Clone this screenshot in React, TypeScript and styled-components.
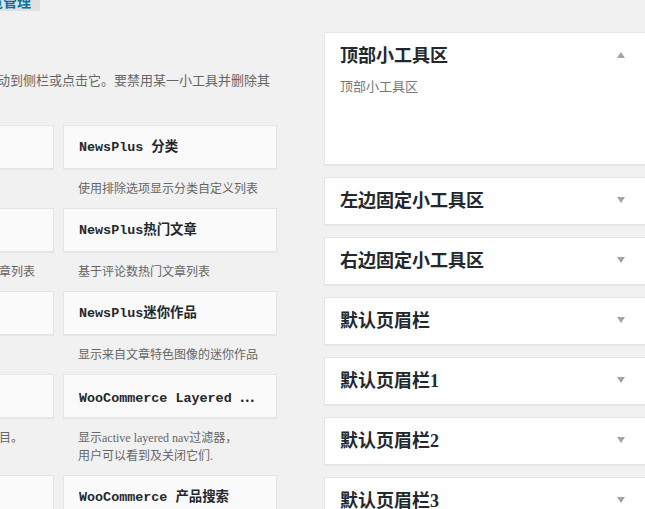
import React from 'react';
import styled, { createGlobalStyle } from 'styled-components';

const GlobalStyle = createGlobalStyle`
  html, body {
    margin: 0;
    padding: 0;
    background: #f1f1f1;
  }
  body {
    font-family: "Noto Sans CJK SC", sans-serif;
    color: #444;
  }
`;

const Page = styled.div`
  width: 645px;
  height: 509px;
  overflow: hidden;
  background: #f1f1f1;
`;

const Header = styled.div`
  margin-top: -12px;
  height: 22px;
`;

const LiveButton = styled.a`
  display: inline-block;
  margin-left: -89px;
  padding: 4px 9px 2px 8px;
  line-height: 16px;
  font-size: 14px;
  font-weight: 700;
  color: #0073aa;
  background: #e0e0e0;
  border-radius: 2px;
  text-decoration: none;
  white-space: nowrap;
`;

const Columns = styled.div`
  display: flex;
  align-items: flex-start;
`;

const Available = styled.div`
  flex: none;
  width: 437px;
  margin-left: -160px;
`;

const Intro = styled.p`
  margin: 61px 0 0 14px;
  line-height: 20px;
  font-size: 13px;
  font-family: "Liberation Serif", "Noto Sans CJK SC", serif;
  color: #666;
  white-space: nowrap;
`;

const WidgetGrid = styled.div`
  display: grid;
  grid-template-columns: 214px 214px;
  column-gap: 9px;
  margin-top: 34px;
`;

const WidgetItem = styled.div`
  display: flex;
  flex-direction: column;
`;

const WidgetCard = styled.div`
  box-sizing: border-box;
  height: 44px;
  padding: 0 15px;
  background: #fafafa;
  border: 1px solid #e5e5e5;
  box-shadow: 0 1px 1px rgba(0, 0, 0, 0.04);
`;

const WidgetTitle = styled.h3`
  margin: 0;
  line-height: 43px;
  font-size: 13.4px;
  font-weight: 700;
  font-family: "Liberation Mono", "Noto Sans CJK SC", monospace;
  color: #23282d;
  white-space: nowrap;
  overflow: hidden;
`;

const Ellipsis = styled.span`
  font-family: "Noto Sans CJK SC", "DejaVu Sans", sans-serif;
  font-weight: 700;
`;

const WidgetDesc = styled.p`
  margin: 0;
  padding: 11px 0 10px 15px;
  line-height: 18px;
  font-size: 12px;
  font-family: "Liberation Serif", "Noto Sans CJK SC", serif;
  color: #666;
  white-space: nowrap;
`;

const Sidebars = styled.div`
  flex: none;
  width: 336px;
  margin: 22px 0 0 47px;
  display: flex;
  flex-direction: column;
  gap: 12px;
`;

const SidebarBox = styled.div`
  background: #fff;
  border: 1px solid #e5e5e5;
  box-shadow: 0 1px 1px rgba(0, 0, 0, 0.04);
`;

const SidebarHead = styled.div`
  display: flex;
  align-items: center;
  padding: 15px 34px 15px 15px;
`;

const SidebarName = styled.h2`
  flex: 1;
  margin: 0;
  line-height: 16px;
  font-size: 18px;
  font-weight: 600;
  font-family: "Liberation Serif", "Noto Sans CJK SC", serif;
  color: #23282d;
`;

const Toggle = styled.span<{ $open: boolean }>`
  width: 0;
  height: 0;
  border-left: 4.5px solid transparent;
  border-right: 4.5px solid transparent;
  ${(p) => (p.$open ? 'border-bottom: 6px solid #a0a5aa;' : 'border-top: 6px solid #a0a5aa;')}
  margin-top: ${(p) => (p.$open ? '-2px' : '-3px')};
`;

const SidebarDesc = styled.p`
  margin: 0;
  padding: 0 15px;
  line-height: 14px;
  font-size: 13px;
  color: #777;
`;

const DropArea = styled.div`
  min-height: 71px;
`;

type Widget = { title: string; desc: string[]; cut?: boolean };

const widgets: Widget[] = [
  { title: '日历', desc: ['您站点文章的日历。'] },
  { title: 'NewsPlus 分类', desc: ['使用排除选项显示分类自定义列表'] },
  { title: '近期文章', desc: ['显示您网站上最近发布的文章列表'] },
  { title: 'NewsPlus热门文章', desc: ['基于评论数热门文章列表'] },
  { title: '文本', desc: ['任意文本或HTML。'] },
  { title: 'NewsPlus迷你作品', desc: ['显示来自文章特色图像的迷你作品'] },
  { title: '自定义菜单', desc: ['显示您网站的自定义菜单项目。'] },
  { title: 'WooCommerce Layered ', cut: true, desc: ['显示active layered nav过滤器，', '用户可以看到及关闭它们.'] },
  { title: '标签云', desc: ['您使用最多的标签。'] },
  { title: 'WooCommerce 产品搜索', desc: ['用于您商店的搜索框。'] },
];

const sidebars = [
  { name: '顶部小工具区', desc: '顶部小工具区', open: true },
  { name: '左边固定小工具区' },
  { name: '右边固定小工具区' },
  { name: '默认页眉栏' },
  { name: '默认页眉栏1' },
  { name: '默认页眉栏2' },
  { name: '默认页眉栏3' },
];

function App() {
  return (
    <Page>
      <GlobalStyle />
      <Header>
        <LiveButton href="#">使用实时预览管理</LiveButton>
      </Header>
      <Columns>
        <Available>
          <Intro>要启用小工具，请将其拖动到侧栏或点击它。要禁用某一小工具并删除其</Intro>
          <WidgetGrid>
            {widgets.map((w) => (
              <WidgetItem key={w.title}>
                <WidgetCard>
                  <WidgetTitle>
                    {w.title}
                    {w.cut && <Ellipsis>⋯</Ellipsis>}
                  </WidgetTitle>
                </WidgetCard>
                <WidgetDesc>
                  {w.desc.map((line, i) => (
                    <React.Fragment key={i}>
                      {i > 0 && <br />}
                      {line}
                    </React.Fragment>
                  ))}
                </WidgetDesc>
              </WidgetItem>
            ))}
          </WidgetGrid>
        </Available>
        <Sidebars>
          {sidebars.map((s) => (
            <SidebarBox key={s.name}>
              <SidebarHead>
                <SidebarName>{s.name}</SidebarName>
                <Toggle $open={!!s.open} />
              </SidebarHead>
              {s.open && (
                <>
                  <SidebarDesc>{s.desc}</SidebarDesc>
                  <DropArea />
                </>
              )}
            </SidebarBox>
          ))}
        </Sidebars>
      </Columns>
    </Page>
  );
}

export default App;
